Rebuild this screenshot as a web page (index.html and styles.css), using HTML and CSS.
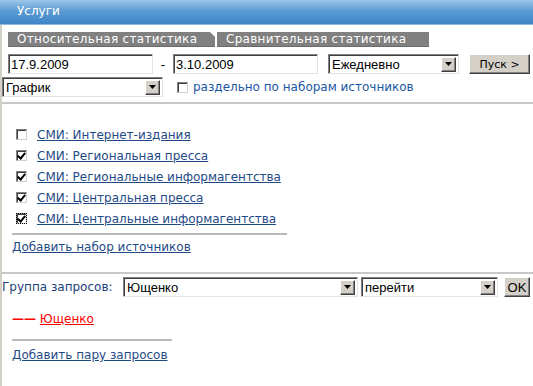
FILE: index.html
```html
<!DOCTYPE html>
<html lang="ru">
<head>
    <meta charset="UTF-8">
    <title>Услуги</title>
    <link rel="stylesheet" href="styles.css">
</head>
<body>
    <div class="header">Услуги</div>
    <div class="panel">
        <div class="tabs">
            <span class="tab first">Относительная статистика</span>
            <span class="tab">Сравнительная статистика</span>
        </div>

        <div class="row dates">
            <input class="field date" type="text" value="17.9.2009">
            <span class="dash">-</span>
            <input class="field date" type="text" value="3.10.2009">
            <span class="select period"><span class="value">Ежедневно</span><span class="arrow"><svg width="7" height="4" viewBox="0 0 7 4"><path d="M0 0h7L3.5 4z" fill="#000"/></svg></span></span>
            <button class="button go">Пуск &gt;</button>
        </div>

        <div class="row view">
            <span class="select chart"><span class="value">График</span><span class="arrow"><svg width="7" height="4" viewBox="0 0 7 4"><path d="M0 0h7L3.5 4z" fill="#000"/></svg></span></span>
            <label class="split"><span class="box"></span>раздельно по наборам источников</label>
        </div>

        <div class="sources">
            <div class="source"><span class="box"></span><a href="#">СМИ: Интернет-издания</a></div>
            <div class="source"><span class="box checked"></span><a href="#">СМИ: Региональная пресса</a></div>
            <div class="source"><span class="box checked"></span><a href="#">СМИ: Региональные информагентства</a></div>
            <div class="source"><span class="box checked"></span><a href="#">СМИ: Центральная пресса</a></div>
            <div class="source"><span class="box checked focus"></span><a href="#">СМИ: Центральные информагентства</a></div>
            <div class="rule"></div>
            <a class="add" href="#">Добавить набор источников</a>
        </div>

        <div class="queries">
            <div class="row group">
                <span class="label">Группа запросов:</span>
                <span class="select query"><span class="value">Ющенко</span><span class="arrow"><svg width="7" height="4" viewBox="0 0 7 4"><path d="M0 0h7L3.5 4z" fill="#000"/></svg></span></span>
                <span class="select action"><span class="value">перейти</span><span class="arrow"><svg width="7" height="4" viewBox="0 0 7 4"><path d="M0 0h7L3.5 4z" fill="#000"/></svg></span></span>
                <button class="button ok">OK</button>
            </div>
            <div class="pair"><span class="line">——</span> <a href="#">Ющенко</a></div>
            <div class="rule short"></div>
            <a class="add" href="#">Добавить пару запросов</a>
        </div>
    </div>
</body>
</html>
```

FILE: styles.css
```css
body {
    margin: 0;
    font-family: "DejaVu Sans", Verdana, sans-serif;
    font-size: 12px;
    background: #fff;
}

.header {
    height: 24px;
    line-height: 22px;
    padding-left: 17px;
    color: #fff;
    background: linear-gradient(#9cc7ea, #5b9bd3 45%, #3e86c6);
    border-bottom: 1px solid #8fb8de;
}

.panel {
    border-left: 2px solid #d4d0c8;
    height: 361px;
}

.tabs {
    display: flex;
    padding: 7px 0 0 6px;
}

.tab {
    position: relative;
    height: 14px;
    line-height: 14px;
    background: #808080;
    color: #fff;
    font-size: 12px;
    letter-spacing: 0.3px;
    padding: 0 10px 0 9px;
    border-bottom: 1px solid #6a6a6a;
}

.tab.first {
    width: 188px;
    margin-right: 2px;
}

.tab.first::after {
    content: "";
    position: absolute;
    right: 0;
    top: 0;
    border-style: solid;
    border-width: 0 5px 5px 0;
    border-color: transparent #fff transparent transparent;
}

.tab + .tab {
    width: 193px;
}

.row {
    display: flex;
    align-items: center;
}

.dates {
    margin: 7px 0 0 6px;
}

.field {
    box-sizing: border-box;
    height: 20px;
    padding: 0 2px;
    font-family: "Liberation Sans", Arial, sans-serif;
    font-size: 13px;
    border: 1px solid;
    border-color: #808080 #e4e4e4 #e4e4e4 #808080;
    box-shadow: inset 1px 1px 0 #404040;
    outline: none;
}

.date {
    width: 145px;
}

.dash {
    width: 20px;
    text-align: center;
    font-family: "Liberation Sans", Arial, sans-serif;
    font-size: 13px;
}

.select {
    box-sizing: border-box;
    display: flex;
    align-items: center;
    height: 20px;
    background: #fff;
    font-family: "Liberation Sans", Arial, sans-serif;
    font-size: 13px;
    border: 1px solid;
    border-color: #808080 #e4e4e4 #e4e4e4 #808080;
    box-shadow: inset 1px 1px 0 #404040;
    padding: 2px 2px 2px 3px;
}

.select .value {
    flex: 1;
}

.arrow {
    box-sizing: border-box;
    width: 15px;
    height: 15px;
    display: flex;
    align-items: center;
    justify-content: center;
    background: #d4d0c8;
    border: 1px solid;
    border-color: #fff #404040 #404040 #fff;
    box-shadow: inset -1px -1px 0 #808080;
}

.period {
    width: 131px;
    margin-left: 10px;
}

.button {
    box-sizing: border-box;
    height: 20px;
    padding: 0;
    background: #d4d0c8;
    font-family: "DejaVu Sans", Tahoma, sans-serif;
    font-size: 11px;
    color: #000;
    border: 1px solid;
    border-color: #fff #404040 #404040 #fff;
    box-shadow: inset -1px -1px 0 #808080;
}

.go {
    width: 61px;
    margin-left: 10px;
}

.view {
    margin: 3px 0 0 0;
}

.chart {
    width: 161px;
}

.split {
    display: flex;
    align-items: center;
    margin-left: 14px;
    color: #1b56a3;
}

.box {
    box-sizing: border-box;
    width: 11px;
    height: 11px;
    display: inline-block;
    background: #fff;
    border: 1px solid;
    border-color: #808080 #d4d0c8 #d4d0c8 #808080;
    box-shadow: inset 1px 1px 0 #404040;
    margin-right: 5px;
    position: relative;
}

.box.checked::after {
    content: "";
    position: absolute;
    left: 2px;
    top: 0px;
    width: 3px;
    height: 6px;
    border: solid #000;
    border-width: 0 2px 2px 0;
    transform: rotate(40deg);
}

.box.focus {
    outline: 1px dotted #000;
    outline-offset: -1px;
}

.sources {
    border-top: 2px solid #c8c8c8;
    margin-top: 5px;
    padding: 20px 0 0 14px;
}

.source {
    height: 21px;
    display: flex;
    align-items: center;
}

.source .box {
    margin-right: 10px;
}

a {
    color: #1f4a86;
}

.rule {
    width: 275px;
    border-top: 2px solid #b8b8b8;
    margin: 4px 0 5px -4px;
}

.sources .add {
    margin-left: -4px;
}

.queries {
    border-top: 2px solid #c8c8c8;
    margin-top: 18px;
    padding-top: 3px;
}

.group .label {
    width: 121px;
    color: #1b3f7a;
}

.query {
    width: 235px;
}

.action {
    width: 137px;
    margin-left: 3px;
}

.ok {
    width: 26px;
    margin-left: 6px;
    font-family: "Liberation Sans", Arial, sans-serif;
    font-size: 13px;
}

.pair {
    margin: 14px 0 0 10px;
    height: 15px;
    line-height: 15px;
    padding-top: 1px;
}

.pair .line {
    font-weight: bold;
    color: #ff0000;
}

.pair a {
    color: #ff0000;
}

.queries .rule.short {
    width: 160px;
    margin: 12px 0 7px 10px;
}

.queries .add {
    margin-left: 10px;
}
```
